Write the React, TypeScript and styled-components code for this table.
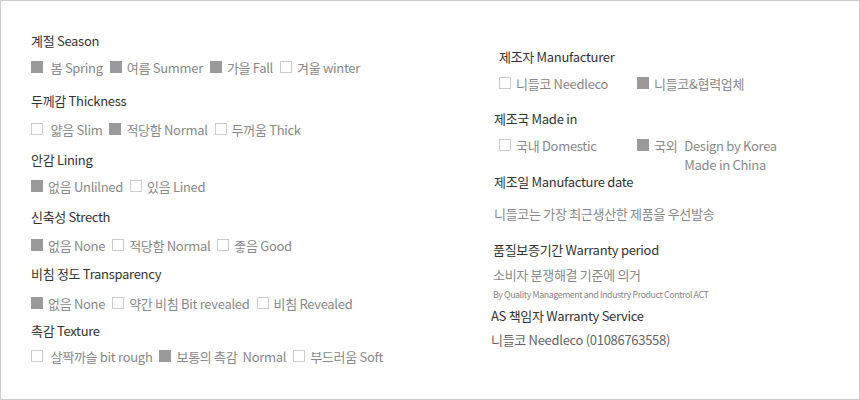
import React from 'react';
import styled, { createGlobalStyle } from 'styled-components';

const GlobalStyle = createGlobalStyle`
  body {
    margin: 0;
    background: #fff;
    font-family: 'Noto Sans CJK KR', 'Noto Sans', sans-serif;
  }
`;

// Layout
const Sheet = styled.div`
  width: 860px;
  height: 400px;
  box-sizing: border-box;
  border: 1px solid #cccccc;
  display: grid;
  grid-template-columns: 460px 1fr;
  padding: 30px 0 0 30px;
`;

const Column = styled.div`
  display: flex;
  flex-direction: column;
`;

const Section = styled.div<{ $top: number; $indent?: number }>`
  display: flex;
  flex-direction: column;
  margin-top: ${(p) => p.$top}px;
  padding-left: ${(p) => p.$indent || 0}px;
`;

const Title = styled.div`
  height: 20px;
  line-height: 20px;
  font-size: 13px;
  color: #333;
  letter-spacing: -0.3px;
  white-space: nowrap;
`;

const Row = styled.div<{ $gap: number }>`
  display: flex;
  align-items: center;
  gap: 7px;
  height: 20px;
  margin-top: ${(p) => p.$gap}px;
`;

const GridRow = styled.div<{ $gap: number }>`
  display: grid;
  grid-template-columns: 138px auto;
  align-items: start;
  margin-top: ${(p) => p.$gap}px;
  padding-left: 5px;
`;

const Item = styled.span`
  display: inline-flex;
  align-items: center;
  gap: 5px;
  height: 20px;
  font-size: 13px;
  color: #888;
  letter-spacing: -0.3px;
  white-space: pre;
`;

const Box = styled.span<{ $on?: boolean }>`
  display: inline-block;
  width: 12px;
  height: 12px;
  box-sizing: border-box;
  background: ${(p) => (p.$on ? '#9a9a9a' : '#fff')};
  border: 1px solid ${(p) => (p.$on ? '#9a9a9a' : '#cccccc')};
  flex-shrink: 0;
`;

const Note = styled.div<{ $gap: number; $dark?: boolean; $small?: boolean }>`
  margin-top: ${(p) => p.$gap}px;
  height: ${(p) => (p.$small ? 14 : 20)}px;
  line-height: ${(p) => (p.$small ? 14 : 20)}px;
  font-size: ${(p) => (p.$small ? 8.8 : 13)}px;
  color: ${(p) => (p.$dark ? '#666' : '#888')};
  letter-spacing: ${(p) => (p.$small ? -0.4 : -0.3)}px;
  white-space: nowrap;
`;

const Origin = styled.div`
  display: flex;
  align-items: flex-start;
  gap: 7px;
`;

const OriginText = styled.div`
  font-size: 13px;
  line-height: 19px;
  margin-top: 1px;
  color: #888;
  letter-spacing: -0.3px;
`;

type Opt = { label: string; on?: boolean };

const sections: { title: string; top: number; gap: number; items: Opt[] }[] = [
  {
    title: '계절 Season',
    top: 0,
    gap: 6,
    items: [
      { label: ' 봄 Spring', on: true },
      { label: '여름 Summer', on: true },
      { label: '가을 Fall', on: true },
      { label: '겨울 winter' },
    ],
  },
  {
    title: '두께감 Thickness',
    top: 14,
    gap: 8,
    items: [
      { label: ' 얇음 Slim' },
      { label: '적당함 Normal', on: true },
      { label: '두꺼움 Thick' },
    ],
  },
  {
    title: '안감 Lining',
    top: 11,
    gap: 6,
    items: [{ label: '없음 Unlilned', on: true }, { label: '있음 Lined' }],
  },
  {
    title: '신축성 Strecth',
    top: 11,
    gap: 8,
    items: [
      { label: '없음 None', on: true },
      { label: '적당함 Normal' },
      { label: '좋음 Good' },
    ],
  },
  {
    title: '비침 정도 Transparency',
    top: 9,
    gap: 9,
    items: [
      { label: '없음 None', on: true },
      { label: '약간 비침 Bit revealed' },
      { label: '비침 Revealed' },
    ],
  },
  {
    title: '촉감 Texture',
    top: 8,
    gap: 5,
    items: [
      { label: ' 살짝까슬 bit rough' },
      { label: '보통의 촉감  Normal', on: true },
      { label: '부드러움 Soft' },
    ],
  },
];

const App: React.FC = () => {
  return (
    <>
      <GlobalStyle />
      <Sheet>
        <Column>
          {sections.map((s) => (
            <Section key={s.title} $top={s.top}>
              <Title>{s.title}</Title>
              <Row $gap={s.gap}>
                {s.items.map((it) => (
                  <Item key={it.label}>
                    <Box $on={it.on} />
                    {it.label}
                  </Item>
                ))}
              </Row>
            </Section>
          ))}
        </Column>

        <Column>
          <Section $top={16} $indent={8}>
            <Title>제조자 Manufacturer</Title>
          </Section>
          <Section $top={0} $indent={3}>
            <GridRow $gap={6}>
              <Item>
                <Box />
                니들코 Needleco
              </Item>
              <Item>
                <Box $on />
                니들코&amp;협력업체
              </Item>
            </GridRow>
          </Section>

          <Section $top={16} $indent={3}>
            <Title>제조국 Made in</Title>
            <GridRow $gap={6}>
              <Item>
                <Box />
                국내 Domestic
              </Item>
              <Origin>
                <Item>
                  <Box $on />
                  국외
                </Item>
                <OriginText>
                  Design by Korea
                  <br />
                  Made in China
                </OriginText>
              </Origin>
            </GridRow>
          </Section>

          <Section $top={-2} $indent={3}>
            <Title>제조일 Manufacture date</Title>
            <Note $gap={12}>니들코는 가장 최근생산한 제품을 우선발송</Note>
          </Section>

          <Section $top={16} $indent={2}>
            <Title>품질보증기간 Warranty period</Title>
            <Note $gap={5}>소비자 분쟁해결 기준에 의거</Note>
            <Note $gap={3} $small>
              By Quality Management and Industry Product Control ACT
            </Note>
          </Section>

          <Section $top={4} $indent={0}>
            <Title>AS 책임자 Warranty Service</Title>
            <Note $gap={4} $dark>
              니들코 Needleco (01086763558)
            </Note>
          </Section>
        </Column>
      </Sheet>
    </>
  );
};

export default App;
